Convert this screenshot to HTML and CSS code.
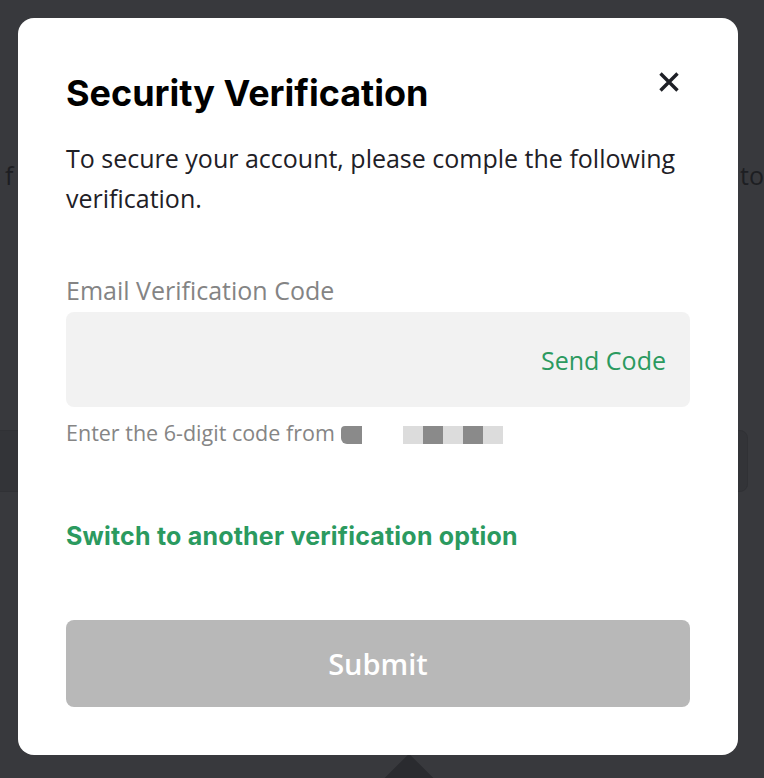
FILE: index.html
```html
<!DOCTYPE html>
<html lang="en">
<head>
<meta charset="utf-8">
<title>Security Verification</title>
<link rel="stylesheet" href="styles.css">
</head>
<body>
<div class="page">
  <div class="page-line"><span>f</span><span>to</span></div>
  <div class="page-box"></div>
  <div class="page-arrow"></div>
</div>

<div class="modal" role="dialog" aria-labelledby="title">
  <div class="modal-head">
    <h1 id="title" class="title">Security Verification</h1>
    <button class="close" aria-label="Close">
      <svg width="22" height="22" viewBox="0 0 22 22"><path d="M2.5 2.5 L19.5 19.5 M19.5 2.5 L2.5 19.5" stroke="#1e2026" stroke-width="3.4" stroke-linecap="butt" fill="none"/></svg>
    </button>
  </div>
  <p class="intro">To secure your account, please comple the following verification.</p>

  <label class="label" for="code">Email Verification Code</label>
  <div class="field">
    <input id="code" class="field-input" type="text">
    <span class="send">Send Code</span>
  </div>
  <div class="hint">Enter the 6-digit code from
    <span class="mask">
      <span class="m m1"></span><span class="m m2"></span><span class="m m3"></span><span class="m m4"></span><span class="m m5"></span><span class="m m6"></span><span class="m m7"></span>
    </span>
  </div>

  <a class="switch" href="#">Switch to another verification option</a>

  <button class="submit" disabled>Submit</button>
</div>
</body>
</html>
```

FILE: styles.css
```css
* { box-sizing: border-box; }
html, body { margin: 0; padding: 0; overflow: hidden; }
body {
  width: 764px;
  height: 778px;
  background: #38393d;
  font-family: "Open Sans", "Noto Sans", sans-serif;
  position: relative;
}

.page { padding-top: 158px; color: #1d1e22; height: 778px; overflow: hidden; }
.page-line {
  display: flex;
  justify-content: space-between;
  font-size: 25px;
  line-height: 34px;
  padding: 0 0 0 5px;
  margin-right: 0;
}
.page-box {
  margin: 238px 16px 0 -20px;
  height: 62px;
  border: 1px solid #303135;
  border-radius: 8px;
  background: #333438;
}
.page-arrow {
  width: 50px; height: 50px;
  margin: 272px 0 0 384px;
  background: #2a2b2f;
  transform: rotate(45deg);
}

.modal {
  position: absolute;
  left: 18px;
  top: 18px;
  width: 720px;
  height: 737px;
  background: #fff;
  border-radius: 16px;
  padding: 50px 48px 0;
  display: flex;
  flex-direction: column;
}

.modal-head {
  display: flex;
  justify-content: space-between;
  align-items: center;
  height: 50px;
}
.title {
  margin: 0;
  font-family: "Inter", sans-serif;
  font-weight: 700;
  font-size: 36px;
  color: #000;
  letter-spacing: 0;
}
.close {
  align-self: flex-start;
  border: 0;
  background: none;
  padding: 0;
  width: 22px;
  height: 22px;
  margin: 3px 10px 0 0;
  cursor: pointer;
}
.close svg { display: block; }

.intro {
  margin: 20px 0 0;
  font-size: 25px;
  line-height: 40px;
  color: #1e2026;
  padding-right: 10px;
}

.label {
  margin-top: 56px;
  font-size: 25px;
  line-height: 32px;
  color: #848484;
}
.field {
  margin-top: 6px;
  height: 95px;
  background: #f2f2f2;
  border-radius: 8px;
  display: flex;
  align-items: center;
  padding: 0 24px;
}
.field-input {
  flex: 1;
  min-width: 0;
  border: 0;
  background: transparent;
  outline: none;
  font-size: 24px;
}
.send {
  font-size: 25px;
  color: #2b9a5f;
}

.hint {
  margin-top: 12px;
  font-size: 21.5px;
  line-height: 28px;
  color: #858585;
  display: flex;
  align-items: center;
  gap: 6px;
}
.mask { display: flex; align-items: center; height: 20px; margin-top: 4px; }
.m { display: block; height: 18px; }
.m1 { width: 21px; background: #8a8a8a; border-radius: 4px 0 0 6px; }
.m2 { width: 41px; background: #fff; }
.m3 { width: 20px; background: #dcdcdc; }
.m4 { width: 20px; background: #8a8a8a; }
.m5 { width: 20px; background: #dcdcdc; }
.m6 { width: 20px; background: #8a8a8a; }
.m7 { width: 20px; background: #dcdcdc; }

.switch {
  margin-top: 73px;
  font-family: "Inter", sans-serif;
  font-size: 25px;
  font-weight: 700;
  letter-spacing: 0.2px;
  color: #2b9a5f;
  text-decoration: none;
  line-height: 32px;
}

.submit {
  margin-top: 68px;
  height: 87px;
  border: 0;
  border-radius: 8px;
  background: #b8b8b8;
  color: #fff;
  font-family: "Open Sans", sans-serif;
  font-size: 29px;
  font-weight: 600;
}
```
